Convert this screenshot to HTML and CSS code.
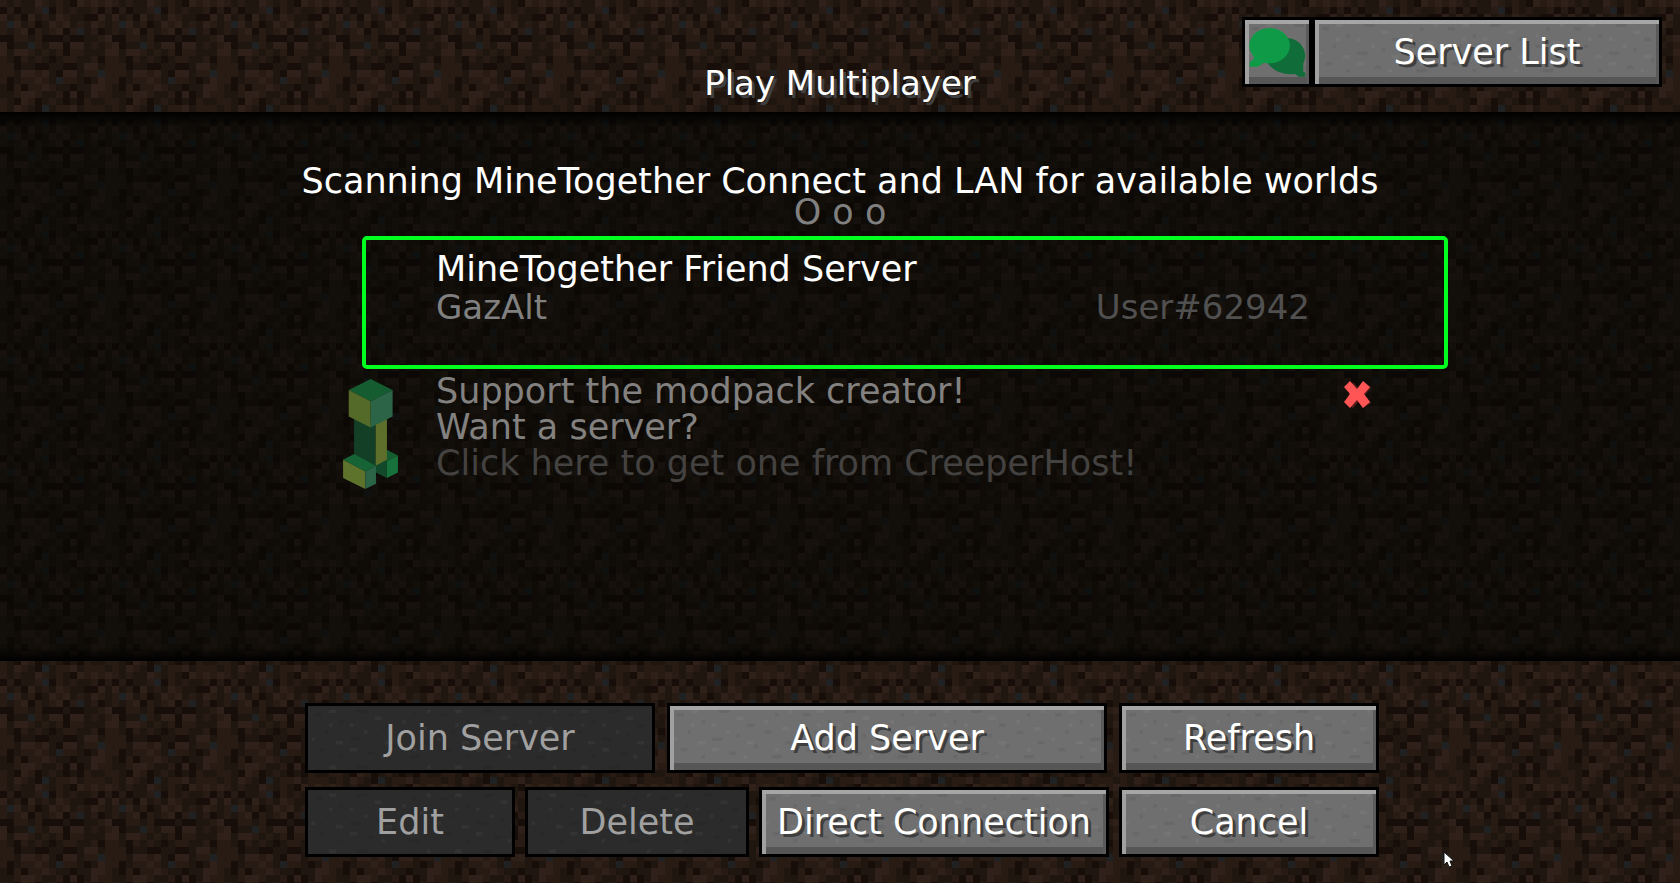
FILE: index.html
```
<!DOCTYPE html>
<html lang="en">
<head>
  <meta charset="UTF-8">
  <meta name="viewport" content="width=device-width, initial-scale=1.0">
  <title>Play Multiplayer</title>
  <link rel="stylesheet" href="styles.css">
</head>
<body>
<header>
  <h1>Play Multiplayer</h1>
  <div class="top-buttons">
    <button class="btn icon-btn" aria-label="Chat">
      <svg width="57" height="50" viewBox="27 36 171 150">
        <path fill="#106c38" d="M140 69a56 53 0 0 1 50 76v25l6 3v12h-20l-10-8q-55 5-83-32z"/>
        <path fill="#0f9a48" d="M90 39a61 53 0 1 1-18 104l-12 8-5 4H29v-14l12-8v-8A61 53 0 0 1 90 39z"/>
      </svg>
    </button>
    <button class="btn server-list">Server List</button>
  </div>
</header>

<main>
  <div class="scanning" role="status">
    <p>Scanning MineTogether Connect and LAN for available worlds</p>
    <p class="dots">O o o</p>
  </div>

  <div class="entries">
    <section class="server selected">
      <h2>MineTogether Friend Server</h2>
      <div class="server-info">
        <span>GazAlt</span>
        <span class="user">User#62942</span>
      </div>
    </section>

    <section class="promo">
      <svg class="creeper" width="55" height="110" viewBox="70 57 165 331">
        <!-- right foot -->
        <path fill="#155c30" d="M202 270l33 17-33 17-34-17z"/>
        <path fill="#17713a" d="M202 304l33-17v51l-33 17z"/>
        <path fill="#12492a" d="M168 300l34-10v65l-34-17z"/>
        <!-- body -->
        <path fill="#123f25" d="M103 170l65 20v128l-65-33z"/>
        <path fill="#5d6f2a" d="M168 190l34-17v127l-34 18z"/>
        <!-- head -->
        <path fill="#155c30" d="M153 57l66 33-66 34-66-34z"/>
        <path fill="#546a29" d="M87 90l66 34v79l-66-33z"/>
        <path fill="#2b6446" d="M153 124l66-34v80l-66 33z"/>
        <!-- left foot -->
        <path fill="#166335" d="M70 300l33-17 66 35-32 17z"/>
        <path fill="#5d732c" d="M70 300l67 35v53l-67-33z"/>
        <path fill="#2b6446" d="M137 335l32-17v54l-32 16z"/>
      </svg>
      <div class="promo-text">
        <p>Support the modpack creator!</p>
        <p>Want a server?</p>
        <p><a href="#">Click here to get one from CreeperHost!</a></p>
      </div>
      <button class="close" aria-label="Close">
        <svg width="27" height="27" viewBox="0 0 27 27">
          <path fill="#5a1c1c" d="M9 1l5 6 5-6 8 6-6 7 6 8-8 5-5-6-5 6-7-5z"/>
          <path fill="#ff5555" d="M6 0l7 8 6-8 7 6-6 7 6 8-7 6-6-8-7 8-6-6 6-8-6-7z"/>
        </svg>
      </button>
    </section>
  </div>
</main>

<footer>
  <div class="row row-top">
    <button class="btn w350" disabled>Join Server</button>
    <button class="btn w440">Add Server</button>
    <button class="btn w260">Refresh</button>
  </div>
  <div class="row">
    <button class="btn w210" disabled>Edit</button>
    <button class="btn w224" disabled>Delete</button>
    <button class="btn w350">Direct Connection</button>
    <button class="btn w260">Cancel</button>
  </div>
</footer>

<svg class="cursor" width="12" height="18" viewBox="0 0 12 18" aria-hidden="true">
  <path fill="#fff" stroke="#111" d="M1 1v13l3-3 2 5 3-1-2-5h4z"/>
</svg>
</body>
</html>
```
FILE: styles.css
```
* {
  box-sizing: border-box;
}
body {
  margin: 0;
  min-height: 100vh;
  display: flex;
  flex-direction: column;
  position: relative;
  color: #fff;
  font-family: "DejaVu Sans", Verdana, sans-serif;
  font-size: 35px;
  line-height: 36px;
  /* dirt, 16x16 texels */
  background: #1f1610 url("data:image/svg+xml,%3Csvg xmlns='http://www.w3.org/2000/svg' width='112' height='112' viewBox='0 0 16 16' shape-rendering='crispEdges'%3E%3Cpath stroke='%23271b13' d='M0 .5h1M2 .5h1M6 .5h1M8 .5h1M12 .5h1M14 .5h1M1 1.5h1M5 1.5h1M8 1.5h1M10 1.5h1M13 1.5h1M15 1.5h1M2 2.5h1M6 2.5h1M9 2.5h1M0 3.5h1M4 3.5h1M8 3.5h1M11 3.5h1M14 3.5h1M0 4.5h1M2 4.5h1M5 4.5h1M7 4.5h1M10 4.5h1M13 4.5h1M2 5.5h2M5 5.5h1M14 5.5h1M5 6.5h1M13 6.5h1M15 6.5h1M4 7.5h1M6 7.5h1M8 7.5h1M10 7.5h2M0 8.5h1M3 8.5h1M5 8.5h1M9 8.5h2M13 8.5h1M15 8.5h1M0 9.5h2M15 9.5h1M0 10.5h2M5 10.5h1M12 10.5h2M15 10.5h1M0 11.5h1M3 11.5h2M6 11.5h1M9 11.5h2M15 11.5h1M2 12.5h1M4 12.5h2M7 12.5h1M15 12.5h1M2 13.5h1M5 13.5h1M8 13.5h1M14 13.5h2M0 14.5h1M4 14.5h1M7 14.5h1M12 14.5h1M15 14.5h1M0 15.5h1M3 15.5h1M8 15.5h2M12 15.5h3'/%3E%3Cpath stroke='%232f2119' d='M5 .5h1M11 .5h1M13 .5h1M15 .5h1M0 2.5h1M4 2.5h1M8 2.5h1M14 2.5h1M2 3.5h1M7 3.5h1M9 3.5h1M13 3.5h1M3 4.5h1M8 4.5h1M15 5.5h1M0 6.5h1M7 6.5h2M10 6.5h2M0 7.5h1M2 7.5h2M15 7.5h1M12 9.5h2M3 10.5h2M6 10.5h1M9 10.5h2M5 11.5h1M14 11.5h1M6 12.5h1M13 12.5h2M3 13.5h2M10 13.5h1M13 13.5h1M3 14.5h1M2 15.5h1M10 15.5h1'/%3E%3Cpath stroke='%23170e0a' d='M10 .5h1M0 1.5h1M2 1.5h1M7 1.5h1M14 1.5h1M3 2.5h1M12 2.5h2M5 3.5h1M4 4.5h1M9 4.5h1M14 4.5h1M0 5.5h2M6 5.5h3M10 5.5h2M1 6.5h1M9 6.5h1M9 7.5h1M2 8.5h1M7 8.5h1M14 8.5h1M2 9.5h1M5 9.5h2M9 9.5h2M8 10.5h1M1 11.5h1M12 11.5h1M1 12.5h1M3 12.5h1M10 12.5h1M9 13.5h1M11 13.5h1M2 14.5h1M5 14.5h1M9 14.5h1M11 14.5h1M5 15.5h1'/%3E%3Cpath stroke='%231f2123' d='M6 1.5h1M1 3.5h1M11 4.5h1M4 6.5h1M14 10.5h1M8 11.5h1M6 15.5h1'/%3E%3C/svg%3E");
}
h1, h2, p {
  margin: 0;
  font-size: 35px;
  font-weight: 400;
}

header {
  display: grid;
  grid-template-columns: 1fr auto 1fr;
  height: 112px;
}
h1 {
  grid-column: 2;
  align-self: end;
  padding-bottom: 11px;
  font-size: 34px;
  text-shadow: 3px 3px 0 #3e4042;
}
.top-buttons {
  display: flex;
  justify-content: flex-end;
  align-items: flex-start;
  padding: 17px 18px 0 0;
}

.btn {
  height: 70px;
  padding: 0;
  border: 3px solid #000;
  color: #fff;
  font: inherit;
  white-space: nowrap;
  text-shadow: 3px 3px 0 #3e3e3e;
  cursor: pointer;
  /* stone specks */
  background: #6f6f6f url("data:image/svg+xml,%3Csvg xmlns='http://www.w3.org/2000/svg' width='126' height='56' viewBox='0 0 36 16'%3E%3Cpath stroke='%23000' stroke-opacity='.06' d='M2 2.5h2M9 4.5h1M14 1.5h3M22 5.5h2M30 2.5h1M5 7.5h1M12 9.5h3M19 8.5h1M27 7.5h2M33 10.5h2M3 12.5h2M9 14.5h1M17 13.5h2M24 11.5h1M29 14.5h3'/%3E%3Cpath stroke='%23fff' stroke-opacity='.04' d='M6 1.5h2M12 5.5h1M19 3.5h2M27 4.5h1M32 6.5h2M1 9.5h1M8 10.5h2M16 7.5h1M22 10.5h2M30 12.5h1M12 12.5h2M21 14.5h1M6 5.5h1M34 1.5h1'/%3E%3C/svg%3E");
  box-shadow: inset 0 4px #a6a6a6, inset 4px 0 #a0a0a0, inset -3px 0 #5a5a5a, inset 0 -7px #565656;
}
.btn:disabled {
  color: #a0a0a0;
  text-shadow: none;
  background-color: #2b2b2b;
  box-shadow: none;
  cursor: default;
}
.icon-btn {
  width: 70px;
  display: flex;
  align-items: center;
  justify-content: center;
}
.server-list {
  width: 350px;
}

main {
  flex: 1;
  padding-top: 54px;
  background:
    linear-gradient(#000, transparent 14px),
    linear-gradient(to top, #000, transparent 14px),
    rgba(2, 4, 1, 0.54);
}
.scanning {
  text-align: center;
  line-height: 31px;
}
.dots {
  color: #808080;
}
.entries {
  width: 1216px;
  max-width: 100%;
  margin: 8px auto 0;
  padding-left: 111px;
}
.server {
  min-height: 133px;
  margin-left: 19px;
  padding: 10px 134px 0 70px;
  line-height: 38px;
}
.selected {
  border: 4px solid #00ff1e;
  border-radius: 5px;
}
.server-info {
  display: flex;
  justify-content: space-between;
  color: #808080;
  font-size: 34px;
}
.user {
  color: #505050;
}
.promo {
  display: flex;
  align-items: flex-start;
  margin-top: 4px;
  padding-right: 77px;
  color: #828180;
}
.creeper {
  margin: 6px 38px 0 0;
}
.promo-text {
  flex: 1;
}
.promo a {
  color: #444240;
  text-decoration: none;
}
.close {
  display: flex;
  margin-top: 8px;
  padding: 0;
  border: 0;
  background: none;
  cursor: pointer;
}

footer {
  padding: 42px 0 26px 4px;
}
.row {
  display: flex;
  gap: 10px;
  width: 1074px;
  max-width: 100%;
  margin: 0 auto;
}
.row-top {
  gap: 12px;
  margin-bottom: 14px;
}
.w210 { width: 210px; }
.w224 { width: 224px; }
.w260 { width: 260px; }
.w350 { width: 350px; }
.w440 { width: 440px; }

.cursor {
  position: absolute;
  right: 225px;
  bottom: 14px;
}
```
